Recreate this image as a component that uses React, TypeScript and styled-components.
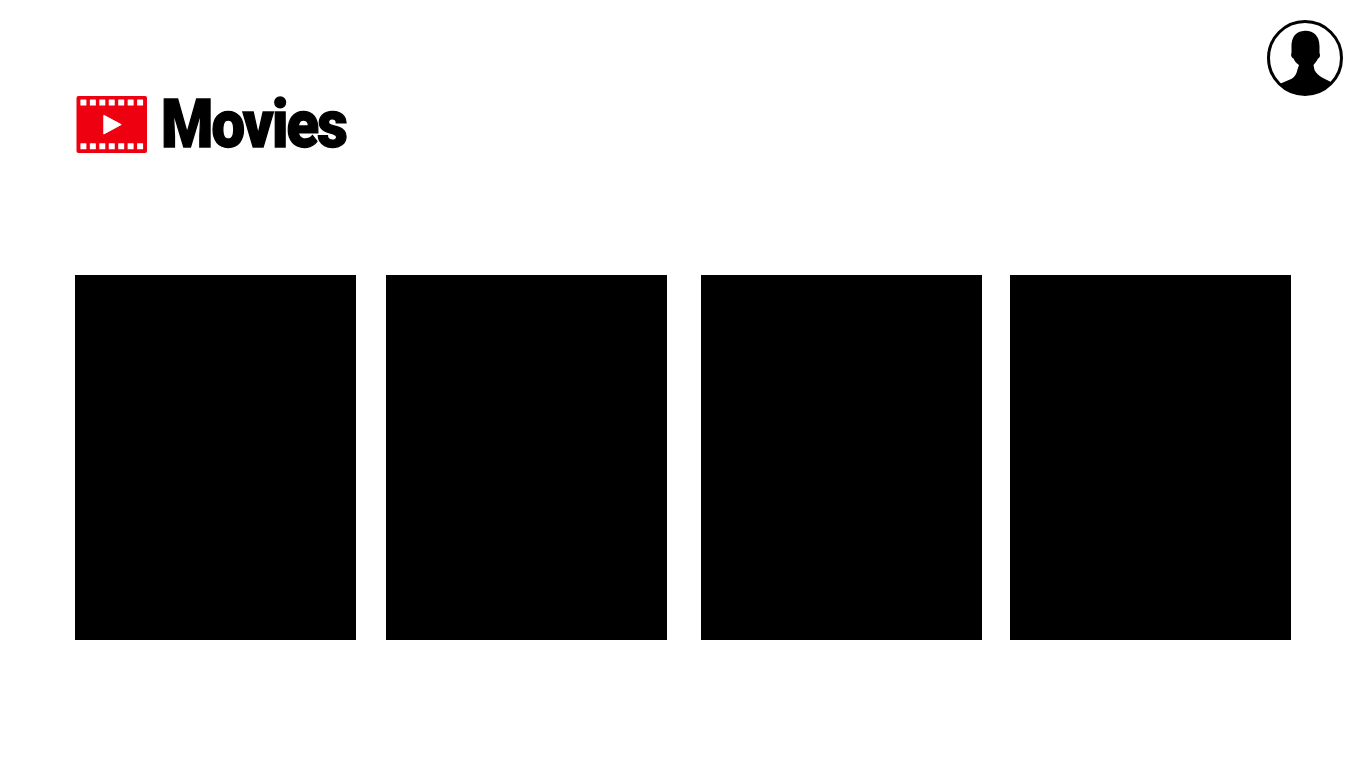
import React from 'react';
import styled, { createGlobalStyle } from 'styled-components';

const GlobalStyle = createGlobalStyle`
  html, body {
    margin: 0;
    padding: 0;
    background: #fff;
    font-family: "Roboto", "Liberation Sans", sans-serif;
  }
`;

const Page = styled.div`
  width: 1366px;
  height: 768px;
  overflow: hidden;
  display: flex;
  flex-direction: column;
`;

const TopBar = styled.div`
  display: flex;
  justify-content: flex-end;
  padding: 20px 23px 0 0;
  height: 76px;
`;

const Header = styled.div`
  display: flex;
  align-items: center;
  gap: 14px;
  padding-left: 76px;
  height: 57px;
`;

const Title = styled.h1`
  margin: 0;
  font-family: "Roboto", "Liberation Sans", sans-serif;
  font-weight: 900;
  font-size: 66px;
  line-height: 57px;
  letter-spacing: -2px;
  color: #000;
  transform: scaleX(0.905);
  transform-origin: left center;
  -webkit-text-stroke: 1.4px #000;
`;

const Row = styled.div`
  display: flex;
  margin-top: 122px;
  padding-left: 75px;
`;

const Card = styled.div<{ $gap: number }>`
  width: 281px;
  height: 365px;
  background: #000;
  margin-right: ${({ $gap }) => $gap}px;
`;

const FilmLogo = () => (
  <svg width="71" height="57" viewBox="0 0 71 57">
    <rect x="0.5" y="0" width="70.5" height="57" rx="2" fill="#ee0010" />
    {[0, 1, 2, 3, 4, 5, 6].map((i) => (
      <React.Fragment key={i}>
        <rect x={4.4 + i * 9.45} y="3.6" width="6" height="6" rx="0.5" fill="#fff" />
        <rect x={4.4 + i * 9.45} y="47.2" width="6" height="6" rx="0.5" fill="#fff" />
      </React.Fragment>
    ))}
    <path d="M27.8 19.3 L45.2 28.6 L27.8 38 Z" fill="#fff" stroke="#fff" strokeWidth="1" strokeLinejoin="round" />
  </svg>
);

const Avatar = () => (
  <svg width="76" height="76" viewBox="0 0 76 76">
    <defs>
      <clipPath id="avatar-clip">
        <circle cx="38" cy="38" r="36.5" />
      </clipPath>
    </defs>
    <path
      clipPath="url(#avatar-clip)"
      d="M24.5 28 C24 18 28 11 38 10.7 C47 10.5 53 16 52.5 28 L52.5 33 C53.5 35 53 38 51 38.5 C50 41 48 43 46.5 45 L47.5 50 C49 53 52 56 55 57.5 L64 62 L72 68 L72 76 L4 76 L4 68 L13.7 63.5 L24.7 58.8 C28 56.5 30 53 30.3 50 L32 45 C29 43 27.5 41 26.5 38.5 C24.5 38 23.5 35 24.5 33 Z"
      fill="#000"
    />
    <circle cx="38" cy="38" r="36.5" fill="none" stroke="#000" strokeWidth="3" />
  </svg>
);

const cardGaps = [30, 34, 28, 0];

const App: React.FC = () => {
  return (
    <Page>
      <GlobalStyle />
      <TopBar>
        <Avatar />
      </TopBar>
      <Header>
        <FilmLogo />
        <Title>Movies</Title>
      </Header>
      <Row>
        {cardGaps.map((gap, index) => (
          <Card key={index} $gap={gap} />
        ))}
      </Row>
    </Page>
  );
};

export default App;
